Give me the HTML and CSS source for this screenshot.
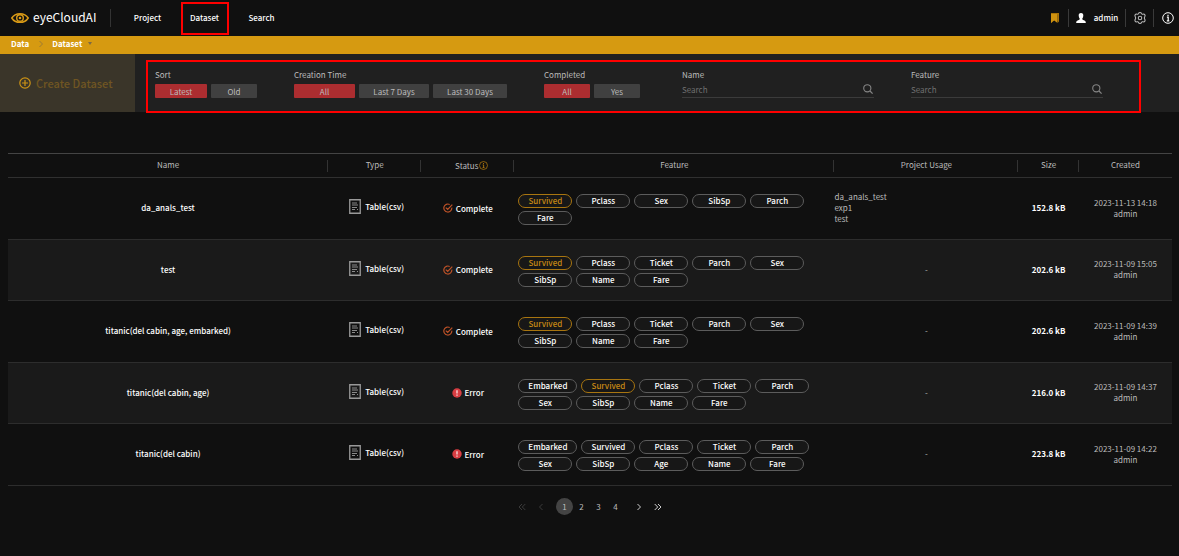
FILE: index.html
```html
<!DOCTYPE html>
<html lang="en">
<head>
<meta charset="utf-8">
<title>eyeCloudAI - Dataset</title>
<link rel="stylesheet" href="styles.css">
</head>
<body>
<svg class="sprite" aria-hidden="true">
  <symbol id="i-file" viewBox="0 0 12 15"><path d="M.75.75h10.500v13.500H.75z" fill="none" stroke="#999" stroke-width="1.300"/><path d="M3 4h5M3 6h6M3 8.500h5M3 10.500h3M8 10.500h1" stroke="#999" stroke-width=".9" fill="none"/></symbol>
  <symbol id="i-done" viewBox="0 0 10 10"><path d="M8.800 4.600A4 4 0 1 1 6.700 1.500M2.800 4.600l1.900 1.900L9.300 1.600" fill="none" stroke="#bd5228" stroke-width="1.200"/></symbol>
  <symbol id="i-error" viewBox="0 0 10 10"><circle cx="5" cy="5" r="4.700" fill="#d83d42"/><path d="M5 2.300v3.200M5 6.500v1.200" stroke="#fff" stroke-width="1.100"/></symbol>
  <symbol id="i-info" viewBox="0 0 12 12"><circle cx="6" cy="6" r="5.300" fill="none" stroke="currentColor"/><path d="M6 2.700v1.400M4.900 5.200h1.300v3.600M4.800 8.800h2.500" fill="none" stroke="currentColor" stroke-width="1.200"/></symbol>
  <symbol id="i-search" viewBox="0 0 10 10"><circle cx="4.300" cy="4.300" r="3.600" fill="none" stroke="#858585" stroke-width="1.100"/><path d="M7 7l2.600 2.600" stroke="#858585" stroke-width="1.200"/></symbol>
</svg>

<header class="topbar">
  <a class="brand" href="#">
    <svg width="18" height="12" viewBox="0 0 18 12" aria-hidden="true"><path d="M.8 6C4.300.2 13.700.2 17.200 6 13.700 11.800 4.300 11.800.8 6z" fill="none" stroke="#d99a16" stroke-width="1.500"/><circle cx="9" cy="6" r="3.300" fill="none" stroke="#d99a16" stroke-width="1.400"/><circle cx="9" cy="6" r="1.300" fill="#d99a16"/></svg>
    <span>eyeCloudAI</span>
  </a>
  <nav class="nav">
    <a href="#">Project</a>
    <a class="marked" href="#">Dataset</a>
    <a href="#">Search</a>
  </nav>
  <div class="tools">
    <button class="tool bookmark" aria-label="Bookmarks"><svg width="8" height="10" viewBox="0 0 8 10"><path d="M0 0h8v9.500L6.500 8V1.200H1V9L0 10z" fill="#a97308"/><path d="M0 1h6.500v9L3.200 7.500 0 10z" fill="#cf920f"/></svg></button>
    <button class="tool user"><svg width="10" height="10" viewBox="0 0 10 10" aria-hidden="true"><path d="M5 0c1.700 0 2.400 1.100 2.300 2.700C7.200 4 6.800 4.900 6.300 5.500c0 1.100.5 1.400 1.600 1.800C9.400 7.900 9.800 8.500 9.800 10H.2c0-1.500.4-2.100 1.900-2.700 1.100-.4 1.600-.7 1.600-1.800C3.200 4.900 2.800 4 2.700 2.700 2.600 1.100 3.300 0 5 0z" fill="#fff"/></svg><span>admin</span></button>
    <button class="tool gear" aria-label="Settings"><svg width="14" height="14" viewBox="0 0 12 12" fill="none" stroke="#b8b8b8" stroke-width=".9"><path d="M4.700 2.200a1.400 1.400 0 0 1 2.600 0l.5.600.8-.1a1.400 1.400 0 0 1 1.400 2.300L9.700 6l.3 1a1.400 1.400 0 0 1-1.400 2.300l-.8-.1-.5.600a1.400 1.400 0 0 1-2.600 0l-.5-.6-.8.100A1.400 1.400 0 0 1 2 7l.3-1L2 5a1.400 1.400 0 0 1 1.400-2.300l.8.100z"/><circle cx="6" cy="6" r="1.500"/></svg></button>
    <button class="tool info" aria-label="Information"><svg width="12" height="12"><use href="#i-info"/></svg></button>
  </div>
</header>

<nav class="crumbs" aria-label="Breadcrumb">
  <a href="#">Data</a>
  <svg class="chevron" width="4" height="8" viewBox="0 0 4 8"><path d="M.5 1l3 3-3 3" fill="none" stroke="#9b7b35"/></svg>
  <a href="#">Dataset</a>
  <svg class="caret" width="4" height="3" viewBox="0 0 4 3"><path d="M0 0h4L2 3z" fill="#7c6a45"/></svg>
</nav>

<section class="filterbar">
  <button class="create">
    <svg width="12" height="12" viewBox="0 0 12 12" fill="none" stroke="#cd9315" stroke-width="1.200" aria-hidden="true"><circle cx="6" cy="6" r="5.200"/><path d="M6 3v6M3 6h6"/></svg>
    <span>Create Dataset</span>
  </button>
  <div class="filters">
    <div class="group">
      <span class="label">Sort</span>
      <div class="options"><button class="opt w52 on">Latest</button><button class="opt w46">Old</button></div>
    </div>
    <div class="group">
      <span class="label">Creation Time</span>
      <div class="options"><button class="opt w61 on">All</button><button class="opt w70">Last 7 Days</button><button class="opt w74">Last 30 Days</button></div>
    </div>
    <div class="group completed">
      <span class="label">Completed</span>
      <div class="options"><button class="opt w46 on">All</button><button class="opt w46">Yes</button></div>
    </div>
    <div class="group search">
      <label class="label" for="q-name">Name</label>
      <div class="field"><input id="q-name" type="text" placeholder="Search"><svg width="10" height="10"><use href="#i-search"/></svg></div>
    </div>
    <div class="group search">
      <label class="label" for="q-feature">Feature</label>
      <div class="field"><input id="q-feature" type="text" placeholder="Search"><svg width="10" height="10"><use href="#i-search"/></svg></div>
    </div>
  </div>
</section>

<main>
  <table class="datasets">
    <colgroup><col class="c-name"><col class="c-type"><col class="c-status"><col class="c-feature"><col class="c-usage"><col class="c-size"><col class="c-created"></colgroup>
    <thead>
      <tr><th>Name</th><th>Type</th><th><span class="inline tight">Status <svg class="hint" width="9" height="9"><use href="#i-info"/></svg></span></th><th>Feature</th><th>Project Usage</th><th>Size</th><th>Created</th></tr>
    </thead>
    <tbody>
      <tr>
        <td class="strong">da_anals_test</td>
        <td class="kind"><span class="inline type"><svg width="12" height="15"><use href="#i-file"/></svg>Table(csv)</span></td>
        <td><span class="inline status"><svg width="10" height="10"><use href="#i-done"/></svg>Complete</span></td>
        <td class="features"><div class="tags"><span class="tag target">Survived</span><span class="tag">Pclass</span><span class="tag">Sex</span><span class="tag">SibSp</span><span class="tag">Parch</span><span class="tag">Fare</span></div></td>
        <td class="usage">da_anals_test<br>exp1<br>test</td>
        <td class="size">152.8 kB</td>
        <td>2023-11-13 14:18<br>admin</td>
      </tr>
      <tr>
        <td class="strong">test</td>
        <td class="kind"><span class="inline type"><svg width="12" height="15"><use href="#i-file"/></svg>Table(csv)</span></td>
        <td><span class="inline status"><svg width="10" height="10"><use href="#i-done"/></svg>Complete</span></td>
        <td class="features"><div class="tags"><span class="tag target">Survived</span><span class="tag">Pclass</span><span class="tag">Ticket</span><span class="tag">Parch</span><span class="tag">Sex</span><span class="tag">SibSp</span><span class="tag">Name</span><span class="tag">Fare</span></div></td>
        <td>-</td>
        <td class="size">202.6 kB</td>
        <td>2023-11-09 15:05<br>admin</td>
      </tr>
      <tr>
        <td class="strong">titanic(del cabin, age, embarked)</td>
        <td class="kind"><span class="inline type"><svg width="12" height="15"><use href="#i-file"/></svg>Table(csv)</span></td>
        <td><span class="inline status"><svg width="10" height="10"><use href="#i-done"/></svg>Complete</span></td>
        <td class="features"><div class="tags"><span class="tag target">Survived</span><span class="tag">Pclass</span><span class="tag">Ticket</span><span class="tag">Parch</span><span class="tag">Sex</span><span class="tag">SibSp</span><span class="tag">Name</span><span class="tag">Fare</span></div></td>
        <td>-</td>
        <td class="size">202.6 kB</td>
        <td>2023-11-09 14:39<br>admin</td>
      </tr>
      <tr>
        <td class="strong">titanic(del cabin, age)</td>
        <td class="kind"><span class="inline type"><svg width="12" height="15"><use href="#i-file"/></svg>Table(csv)</span></td>
        <td><span class="inline status"><svg width="10" height="10"><use href="#i-error"/></svg>Error</span></td>
        <td class="features"><div class="tags"><span class="tag">Embarked</span><span class="tag target">Survived</span><span class="tag">Pclass</span><span class="tag">Ticket</span><span class="tag">Parch</span><span class="tag">Sex</span><span class="tag">SibSp</span><span class="tag">Name</span><span class="tag">Fare</span></div></td>
        <td>-</td>
        <td class="size">216.0 kB</td>
        <td>2023-11-09 14:37<br>admin</td>
      </tr>
      <tr>
        <td class="strong">titanic(del cabin)</td>
        <td class="kind"><span class="inline type"><svg width="12" height="15"><use href="#i-file"/></svg>Table(csv)</span></td>
        <td><span class="inline status"><svg width="10" height="10"><use href="#i-error"/></svg>Error</span></td>
        <td class="features"><div class="tags"><span class="tag">Embarked</span><span class="tag">Survived</span><span class="tag">Pclass</span><span class="tag">Ticket</span><span class="tag">Parch</span><span class="tag">Sex</span><span class="tag">SibSp</span><span class="tag">Age</span><span class="tag">Name</span><span class="tag">Fare</span></div></td>
        <td>-</td>
        <td class="size">223.8 kB</td>
        <td>2023-11-09 14:22<br>admin</td>
      </tr>
    </tbody>
  </table>

  <nav class="pager" aria-label="Pages">
    <button class="step" disabled aria-label="First page"><svg width="8" height="8" viewBox="0 0 8 8"><path d="M4 1L1 4l3 3M7.300 1l-3 3 3 3"/></svg></button>
    <button class="step" disabled aria-label="Previous page"><svg width="8" height="8" viewBox="0 0 8 8"><path d="M5.500 1l-3 3 3 3"/></svg></button>
    <div class="pages"><button class="page current">1</button><button class="page">2</button><button class="page">3</button><button class="page">4</button></div>
    <button class="step" aria-label="Next page"><svg width="8" height="8" viewBox="0 0 8 8"><path d="M2.500 1l3 3-3 3"/></svg></button>
    <button class="step" aria-label="Last page"><svg width="8" height="8" viewBox="0 0 8 8"><path d="M.7 1l3 3-3 3M4 1l3 3-3 3"/></svg></button>
  </nav>
</main>
</body>
</html>
```
FILE: styles.css
```css
* { box-sizing: border-box; }

body {
  margin: 0;
  min-height: 100vh;
  background: #101010;
  color: #bcbcbc;
  font: 8px/11px "Noto Sans CJK KR", "Noto Sans", sans-serif;
}

a { color: inherit; text-decoration: none; }
button { margin: 0; padding: 0; border: 0; background: none; color: inherit; font: inherit; cursor: pointer; }
svg { display: block; flex: none; }
.sprite { position: absolute; width: 0; height: 0; }

/* Top bar */
.topbar { display: flex; align-items: center; height: 36px; padding: 0 5px 0 11px; color: #fff; }
.brand { display: flex; align-items: center; gap: 4px; height: 18px; width: 100px; border-right: 1px solid #333; font-size: 12px; line-height: 18px; }
.brand span { padding-bottom: 2px; }
.nav { display: flex; align-items: center; padding-left: 8px; font-weight: 500; }
.nav a { width: 57px; line-height: 34px; text-align: center; }
.marked { position: relative; }
.marked::after { content: ""; position: absolute; inset: 1px 4px 0 5px; border: 2px solid #f00; }
.tools { display: flex; align-items: center; margin-left: auto; }
.tool { display: flex; align-items: center; justify-content: center; height: 18px; }
.tool + .tool { border-left: 1px solid #3a3a3a; }
.bookmark { width: 17px; padding-right: 9px; }
.user { width: 57px; gap: 8px; font-weight: 500; }
.user span { padding-bottom: 1px; }
.gear { width: 28px; }
.info { width: 21px; padding-left: 8px; }

/* Breadcrumb */
.crumbs { display: flex; align-items: center; height: 18px; padding: 0 11px 3px; background: #d69a11; color: #fff; font-weight: 700; }
.chevron { margin: 0 9px 0 10px; }
.caret { margin-left: 6px; }

/* Filters */
.filterbar { display: flex; height: 58px; background: #202020; }
.create { display: flex; align-items: center; gap: 5px; width: 135px; padding-left: 19px; background: #3a3529; color: #705522; font-size: 11px; font-weight: 500; }
.filters { display: flex; flex: 1; gap: 37px; margin: 6px 38px -1px 11px; padding: 7px 36px 0 7px; border: 2px solid #f00; z-index: 1; }
.label { display: block; margin-bottom: 4px; }
.options { display: flex; gap: 4px; }
.opt { height: 14px; border-radius: 1px; background: #404040; line-height: 13px; }
.opt.on { background: #ac2d30; }
.w46 { width: 46px; }
.w52 { width: 52px; }
.w61 { width: 61px; }
.w70 { width: 70px; }
.w74 { width: 74px; }
.completed { margin-right: 5px; }
.search { flex: 1; }
.field { display: flex; align-items: flex-start; height: 14px; border-bottom: 1px solid #3b3b3b; padding-right: 1px; }
.field input { flex: 1; min-width: 0; height: 11px; padding: 0; border: 0; outline: 0; background: none; color: inherit; font: inherit; }
.field input::placeholder { color: #707070; opacity: 1; }

/* Table */
main { padding: 41px 7px 0 8px; }
.datasets { width: 100%; border-collapse: separate; border-spacing: 0; table-layout: fixed; text-align: center; }
.c-name, .c-feature { width: 27.5%; }
.c-type, .c-status, .c-created { width: 8%; }
.c-usage { width: 15.8%; }
.c-size { width: 5.2%; }
th, td { padding: 0 0 2px; }
th {
  height: 25px;
  border-top: 1px solid #444;
  border-bottom: 1px solid #303030;
  font-weight: 400;
  background: linear-gradient(#333, #333) right center / 1px 12px no-repeat;
}
th:last-child { background: none; }
td { height: 62px; border-bottom: 1px solid #2d2d2d; }
tr:nth-child(even) td { height: 61px; background: #1a1a1a; }
.strong { color: #fff; font-weight: 500; }
.size { color: #fff; font-weight: 700; }
.usage { text-align: left; }
.inline { display: inline-flex; align-items: center; gap: 3px; vertical-align: middle; }
.tight { gap: 1px; padding-left: 8px; }
.hint { color: #b27b10; }
.type, .status { color: #fff; font-weight: 500; }
.type { gap: 4px; }
.kind { padding: 0 0 4px 4px; }
.features { padding: 2px 0 0 4px; }
.tags { display: flex; flex-wrap: wrap; gap: 3px 4px; }
.tag { min-width: 54px; height: 14px; padding: 0 9px; border: 1px solid #5c5c5c; border-radius: 7px; background: #171717; color: #fff; font-weight: 500; line-height: 12px; }
.target { border-color: #a87510; color: #c88a14; }

/* Pager */
.pager { display: flex; align-items: center; justify-content: center; gap: 11px; padding-top: 12px; }
.pages { display: flex; }
.page { width: 17px; height: 17px; border-radius: 50%; }
.current { background: #444; }
.step svg { fill: none; stroke: #ccc; }
.step:disabled svg { stroke: #3b3b3b; }
```
